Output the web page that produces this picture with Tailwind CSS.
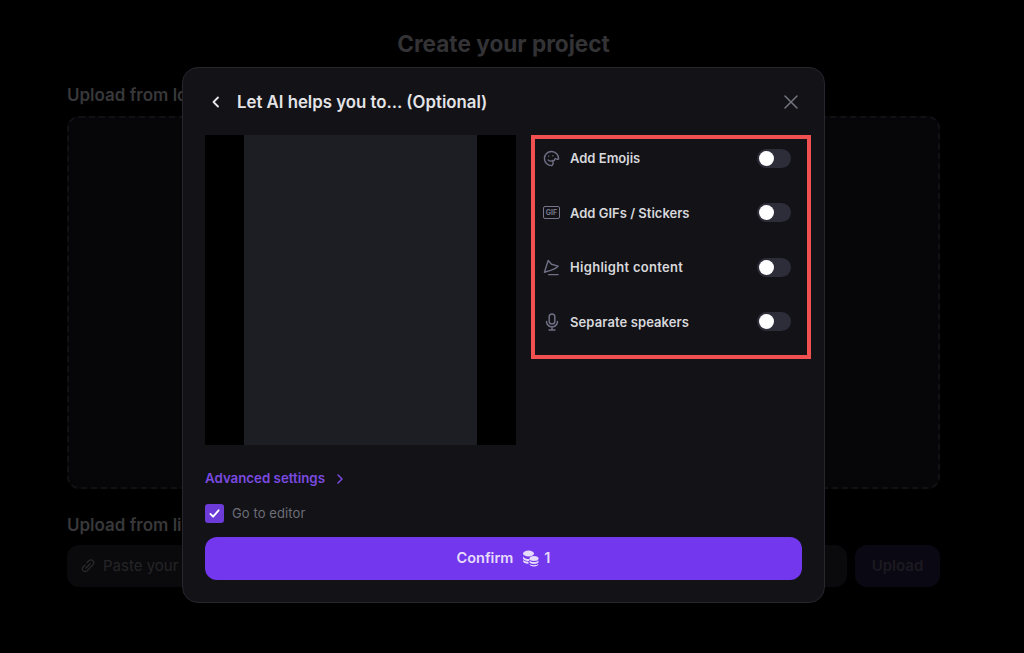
<!DOCTYPE html>
<html lang="en">
<head>
  <meta charset="UTF-8" />
  <title>Create your project</title>
  <script src="https://cdn.jsdelivr.net/npm/@tailwindcss/browser@4"></script>
</head>
<body class="bg-black font-[Inter,sans-serif]">
  <div class="relative w-[1024px] h-[653px] overflow-hidden">
    <!-- page behind the modal -->
    <div class="pl-[67px] pr-[84px] pt-[30px]">
      <h1 class="text-[22.600px] leading-[28px] font-bold text-[#333336] text-center">Create your project</h1>
      <p class="mt-[25px] text-[17px] leading-[24px] font-semibold text-[#38383a]">Upload from local</p>
      <div class="mt-[9px] h-[373px] rounded-xl border-2 border-dashed border-[#111114] bg-[#060608]"></div>
      <p class="mt-[24px] text-[17px] leading-[24px] font-semibold text-[#38383a]">Upload from link</p>
      <div class="mt-[8px] flex gap-2">
        <div class="flex-1 h-[42px] rounded-xl bg-[#0a0a0c] flex items-center gap-2 px-[14px]">
          <svg class="w-[14px] h-[14px] text-[#2a2a2e]" viewBox="0 0 14 14" fill="none" stroke="currentColor" stroke-width="1.300" stroke-linecap="round"><path d="M6 3.500 8 1.700a2.500 2.500 0 0 1 3.800 0l.3.300a2.500 2.500 0 0 1 0 3.600L6 11.900a2.500 2.500 0 0 1-3.700 0l-.2-.2a2.500 2.500 0 0 1 0-3.700L4 6M5 9l4-4"/></svg>
          <span class="text-[15px] text-[#252528]">Paste your link here</span>
        </div>
        <div class="w-[85px] h-[42px] rounded-xl bg-[#0a0812] flex items-center justify-center text-[15px] font-semibold text-[#1c1a21]">Upload</div>
      </div>
    </div>

    <!-- modal -->
    <div class="absolute left-[182px] top-[67px] w-[643px] h-[536px] rounded-2xl border border-[#26262d] bg-[#121217] px-[22px] pt-[21px]">
      <div class="h-[26px] flex items-center relative">
        <svg class="w-[12px] h-[12px] ml-[5px] text-[#e8e8ea]" viewBox="0 0 12 12" fill="none" stroke="currentColor" stroke-width="1.800" stroke-linecap="round" stroke-linejoin="round"><path d="M8 1.500 3.500 6 8 10.500"/></svg>
        <h2 class="ml-[15px] text-[16.800px] leading-[24px] font-semibold text-[#e4e4e7]">Let AI helps you to... (Optional)</h2>
        <svg class="absolute right-[4px] top-[6px] w-[14px] h-[14px] text-[#75757f]" viewBox="0 0 14 14" fill="none" stroke="currentColor" stroke-width="1.500" stroke-linecap="round"><path d="M1 1l12 12M13 1 1 13"/></svg>
      </div>
      <div class="mt-[20px] flex">
        <div class="w-[311px] h-[310px] shrink-0 bg-black flex justify-center">
          <div class="w-[233px] h-full bg-[#1d1e23]"></div>
        </div>
        <div class="ml-[15px] w-[280px] h-[224px] shrink-0 border-[4px] border-[#f15050] pl-[8px] pr-[16px] pt-[4px] flex flex-col">
          <div class="flex items-center h-[30px] mb-[24.500px]">
            <svg class="w-[17px] h-[17px] text-[#6f6f85]" viewBox="0 0 18 18" fill="none" stroke="currentColor" stroke-width="1.500" stroke-linecap="round" stroke-linejoin="round"><path d="M9.500 16.500A7.500 7.500 0 1 1 16.500 9.500c-1 .3-2.500.2-3.500-.5-.5 1.500-1.500 2.500-2.500 3 .5 1.500 0 3.500-1 4.500Z"/><path d="M6 6.500h.01M10.500 6h.01M5.500 10.500c1.500 1.500 3.500 1.500 5 .5"/></svg>
            <span class="ml-[10px] mt-[2px] flex-1 text-[13px] font-semibold text-[#d8d8dc]">Add Emojis</span>
            <div class="w-[34px] h-[19px] rounded-full bg-[#2d2d3a] p-[2px]"><div class="w-[15px] h-[15px] rounded-full bg-white"></div></div>
          </div>
          <div class="flex items-center h-[30px] mb-[24.500px]">
            <div class="w-[17px] h-[13px] rounded-[2px] border border-[#75758a] flex items-center justify-center text-[7px] leading-none font-bold text-[#75758a]">GIF</div>
            <span class="ml-[10px] mt-[2px] flex-1 text-[13px] font-semibold text-[#d8d8dc]">Add GIFs / Stickers</span>
            <div class="w-[34px] h-[19px] rounded-full bg-[#2d2d3a] p-[2px]"><div class="w-[15px] h-[15px] rounded-full bg-white"></div></div>
          </div>
          <div class="flex items-center h-[30px] mb-[24.500px]">
            <svg class="w-[17px] h-[17px] text-[#6f6f85]" viewBox="0 0 18 18" fill="none" stroke="currentColor" stroke-width="1.500" stroke-linecap="round" stroke-linejoin="round"><path d="M5.500 1.500 1.500 14 8 12c3-1 6-2 8-4.500L9 5.500Z"/><path d="M6 16.500h10"/></svg>
            <span class="ml-[10px] mt-[2px] flex-1 text-[13px] tracking-[0.3px] font-semibold text-[#d8d8dc]">Highlight content</span>
            <div class="w-[34px] h-[19px] rounded-full bg-[#2d2d3a] p-[2px]"><div class="w-[15px] h-[15px] rounded-full bg-white"></div></div>
          </div>
          <div class="flex items-center h-[30px]">
            <svg class="w-[18px] h-[18px] text-[#6f6f85]" viewBox="0 0 18 18" fill="none" stroke="currentColor" stroke-width="1.500" stroke-linecap="round" stroke-linejoin="round"><rect x="6.200" y="1" width="5.600" height="10" rx="2.800"/><path d="M3.500 8.500a5.500 5.500 0 0 0 11 0M9 14v3M6 17h6"/></svg>
            <span class="ml-[9px] mt-[2px] flex-1 text-[13px] tracking-[0.1px] font-semibold text-[#d8d8dc]">Separate speakers</span>
            <div class="w-[34px] h-[19px] rounded-full bg-[#2d2d3a] p-[2px]"><div class="w-[15px] h-[15px] rounded-full bg-white"></div></div>
          </div>
        </div>
      </div>
      <div class="mt-[24px] flex items-center h-[20px] text-[#7c4ae0]">
        <span class="text-[13.300px] font-semibold">Advanced settings</span>
        <svg class="ml-[10px] w-[10px] h-[10px]" viewBox="0 0 10 10" fill="none" stroke="currentColor" stroke-width="1.500" stroke-linecap="round" stroke-linejoin="round"><path d="M3 1l4 4-4 4"/></svg>
      </div>
      <div class="mt-[15px] flex items-center h-[19px]">
        <div class="w-[19px] h-[19px] rounded-[3px] bg-[#6d3bd8] flex items-center justify-center">
          <svg class="w-[11px] h-[11px] text-white" viewBox="0 0 12 12" fill="none" stroke="currentColor" stroke-width="2" stroke-linecap="round" stroke-linejoin="round"><path d="M1.500 6.500 4.500 9.500 10.500 2.500"/></svg>
        </div>
        <span class="ml-[8px] text-[13px] tracking-[0.1px] text-[#6e6e78]">Go to editor</span>
      </div>
      <div class="mt-[14px] h-[43px] pb-[1px] rounded-xl bg-[#7337ee] flex items-center justify-center text-[14.500px] font-semibold text-[#e6dcfb]">
        <span>Confirm</span>
        <svg class="ml-[9px] w-[17px] h-[17px] text-[#e6dcfb]" viewBox="0 0 17 17" fill="currentColor"><ellipse cx="6.500" cy="3.500" rx="5.500" ry="3"/><path d="M1 6c0 1.500 2.500 3 5.500 3 .8 0 1.500-.1 2-.2C7.500 9.500 7 10 7 11H6.500C3.500 11 1 9.800 1 8V6ZM1 10c1 1 3 1.700 5.500 1.800v2C3.500 13.800 1 12.500 1 11v-1Z"/><ellipse cx="12" cy="8.500" rx="4.500" ry="2.500"/><path d="M7.500 10.500c1 1 2.700 1.600 4.500 1.600s3.500-.6 4.500-1.600v1.500c0 1.200-2 2-4.500 2s-4.500-.8-4.500-2v-1.500Z"/><path d="M7.500 14c1 .8 2.700 1.200 4.500 1.200s3.500-.4 4.500-1.200c0 1.500-2 2.500-4.500 2.500s-4.500-1-4.500-2.500Z"/></svg>
        <span class="ml-[5px]">1</span>
      </div>
    </div>
  </div>
</body>
</html>
